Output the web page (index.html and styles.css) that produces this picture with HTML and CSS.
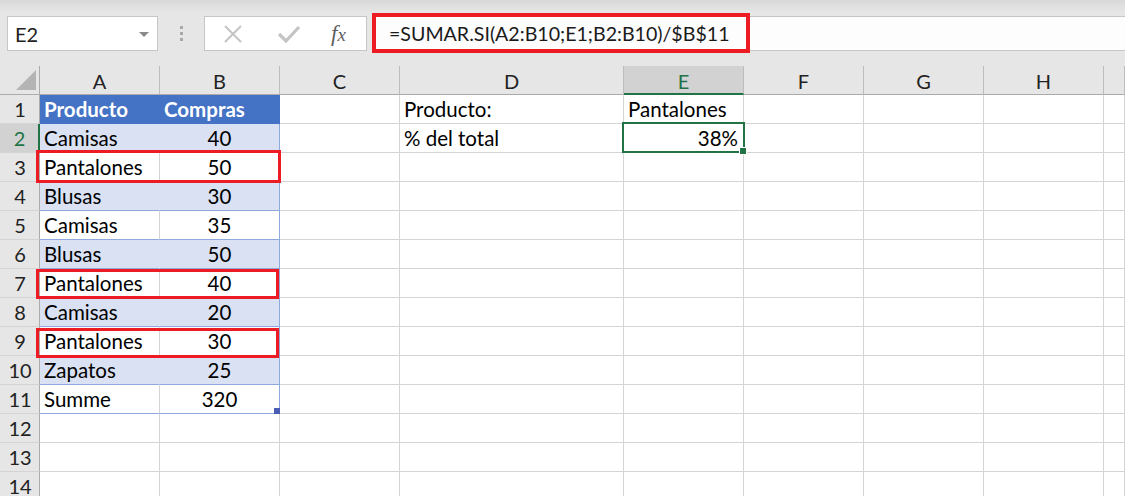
FILE: index.html
```
<!DOCTYPE html>
<html lang="es">
<head>
  <meta charset="UTF-8" />
  <title>SUMAR.SI</title>
  <link rel="stylesheet" href="styles.css">
</head>
<body>
  <div class="formula-bar">
    <div class="name-box">
      <span>E2</span>
      <span class="caret"></span>
    </div>
    <div class="grip"><i></i><i></i><i></i></div>
    <div class="fx-buttons">
      <svg class="btn-icon" width="22" height="22" viewBox="0 0 22 22">
        <path d="M3 3 L19 19 M19 3 L3 19" stroke="#c4c4c4" stroke-width="2" fill="none"/>
      </svg>
      <svg class="btn-icon" width="24" height="22" viewBox="0 0 24 22">
        <path d="M2 11 L9 18 L22 4" stroke="#c4c4c4" stroke-width="3.2" fill="none"/>
      </svg>
      <span class="fx"><i>f</i><i>x</i></span>
    </div>
    <div class="formula">
      <span class="formula-text">=SUMAR.SI(A2:B10;E1;B2:B10)/$B$11</span>
      <div class="mark mark-formula"></div>
    </div>
  </div>

  <div class="sheet" id="sheet">
    <div class="mark mark-row3"></div>
    <div class="mark mark-row7"></div>
    <div class="mark mark-row9"></div>
  </div>

  <script>
    const sheet = document.getElementById('sheet');
    const cols = ['A', 'B', 'C', 'D', 'E', 'F', 'G', 'H', ''];
    const data = [
      ['Producto', 'Compras', '', 'Producto:', 'Pantalones'],
      ['Camisas', '40', '', '% del total', '38%'],
      ['Pantalones', '50'],
      ['Blusas', '30'],
      ['Camisas', '35'],
      ['Blusas', '50'],
      ['Pantalones', '40'],
      ['Camisas', '20'],
      ['Pantalones', '30'],
      ['Zapatos', '25'],
      ['Summe', '320'],
      [], [], []
    ];

    function cell(cls, text) {
      const div = document.createElement('div');
      div.className = cls;
      if (text) div.textContent = text;
      sheet.appendChild(div);
      return div;
    }

    // cabecera de columnas
    cell('corner', '').innerHTML = '<span class="tri"></span>';
    cols.forEach(c => cell('col-head' + (c === 'E' ? ' active' : ''), c));

    data.forEach((row, r) => {
      const n = r + 1;
      cell('row-head' + (n === 2 ? ' active' : ''), String(n));
      cols.forEach((c, i) => {
        let cls = 'c';
        const text = row[i] || '';
        if (i < 2 && n <= 11) {
          cls += ' tbl';
          if (n === 1) cls += ' tbl-head';
          else if (n % 2 === 0 && n <= 10) cls += ' band';
          if (n === 11) cls += ' tbl-total';
          if (i === 1) cls += ' tbl-last';
          if (i === 1 && n > 1) cls += ' center';
        }
        if (c === 'E' && n === 2) cls += ' right sel';
        cell(cls, text);
      });
    });
  </script>
</body>
</html>
```

FILE: styles.css
```
body {
  margin: 0;
  background: #ffffff;
  font-family: Lato, "Liberation Sans", sans-serif;
  color: #000;
  overflow: hidden;
}

/* barra de fórmulas */
.formula-bar {
  height: 66px;
  box-sizing: border-box;
  padding-top: 16px;
  display: flex;
  align-items: flex-start;
  background: linear-gradient(#d8d8d8 0, #e6e6e6 12px, #e6e6e6 100%);
}
.name-box {
  margin-left: 7px;
  width: 151px;
  height: 35px;
  box-sizing: border-box;
  border: 1px solid #c6c6c6;
  background: #fff;
  display: flex;
  align-items: center;
  justify-content: space-between;
  padding: 0 8px 0 7px;
  font-size: 20px;
  color: #222;
}
.caret {
  width: 0; height: 0;
  border-left: 5px solid transparent;
  border-right: 5px solid transparent;
  border-top: 5px solid #8a8a8a;
  margin-top: 2px;
}
.grip {
  width: 46px;
  height: 35px;
  display: flex;
  flex-direction: column;
  align-items: center;
  justify-content: center;
  gap: 3px;
}
.grip i {
  width: 3px; height: 3px;
  background: #a8a8a8;
}
.fx-buttons {
  width: 163px;
  height: 35px;
  box-sizing: border-box;
  border: 1px solid #c6c6c6;
  background: #fff;
  display: flex;
  align-items: center;
  padding-left: 17px;
  gap: 33px;
}
.fx {
  font-family: "Liberation Serif", serif;
  font-style: italic;
  font-size: 23px;
  color: #606060;
  margin-left: -3px;
}
.fx i:last-child { font-size: 19px; }
.formula {
  position: relative;
  flex: 1;
  margin-left: 5px;
  height: 35px;
  box-sizing: border-box;
  border-top: 1px solid #c6c6c6;
  border-bottom: 1px solid #c6c6c6;
  background: #fdfdfd;
  display: flex;
  align-items: center;
  padding-left: 17px;
  font-size: 19.6px;
  color: #1a1a1a;
}

.mark {
  position: absolute;
  box-sizing: border-box;
  border: 4px solid #ed1c24;
  pointer-events: none;
  z-index: 5;
}
.mark-formula { left: 0; top: -4px; width: 378px; height: 40px; }
.mark-row3 { left: 36px; top: 84px; width: 245px; height: 33px; border-width: 3px; }
.mark-row7 { left: 36px; top: 203px; width: 243px; height: 30px; border-width: 3px; }
.mark-row9 { left: 36px; top: 262px; width: 243px; height: 30px; border-width: 3px; }

/* hoja */
.sheet {
  position: relative;
  display: grid;
  grid-template-columns: 40px 120px 120px 120px 224px 120px 120px 120px 120px 21px;
  grid-template-rows: 29px;
  grid-auto-rows: 29px;
  font-size: 20.5px;
}
.sheet > div { box-sizing: border-box; }
.corner, .col-head, .row-head {
  background: #e6e6e6;
  border-right: 1px solid #bdbdbd;
  border-bottom: 1px solid #ababab;
  color: #222;
}
.corner { position: relative; border-right-color: #ababab; }
.tri {
  position: absolute;
  right: 3px; bottom: 4px;
  width: 0; height: 0;
  border-left: 20px solid transparent;
  border-bottom: 20px solid #b4b4b4;
}
.col-head {
  text-align: center;
  line-height: 30px;
  font-size: 20px;
}
.col-head.active {
  background: #d2d2d2;
  color: #217346;
  border-bottom: 2px solid #217346;
}
.row-head {
  text-align: center;
  line-height: 28px;
  font-size: 20px;
  border-bottom-color: #d4d4d4;
  border-right-color: #ababab;
  padding-left: 1px;
}
.row-head.active {
  background: #d2d2d2;
  color: #217346;
  border-right: 2px solid #217346;
}
.c {
  border-right: 1px solid #d4d4d4;
  border-bottom: 1px solid #d4d4d4;
  padding: 0 4px;
  line-height: 28px;
  white-space: nowrap;
}
.c.center { text-align: center; }
.c.right { text-align: right; padding-right: 5px; }

.tbl { border-bottom-color: #8ea9db; }
.tbl.tbl-last { border-right-color: #8ea9db; }
.tbl.band { background: #d9e1f2; border-right-color: #d9e1f2; }
.tbl.band.tbl-last { border-right-color: #8ea9db; }
.tbl.tbl-head {
  background: #4472c4;
  color: #fff;
  font-weight: bold;
  border-color: #4472c4;
}
.tbl.tbl-total.tbl-last { position: relative; }
.tbl.tbl-total.tbl-last::after {
  content: "";
  position: absolute;
  right: -1px; bottom: -1px;
  width: 6px; height: 6px;
  background: #4a5cb4;
}

.sel { position: relative; }
.sel::after {
  content: "";
  position: absolute;
  left: -2px; top: -2px; right: -2px; bottom: -1px;
  border: 2px solid #217346;
}
.sel::before {
  content: "";
  position: absolute;
  right: -4px; bottom: -3px;
  width: 6px; height: 6px;
  background: #217346;
  border: 1px solid #fff;
  z-index: 2;
}
```
